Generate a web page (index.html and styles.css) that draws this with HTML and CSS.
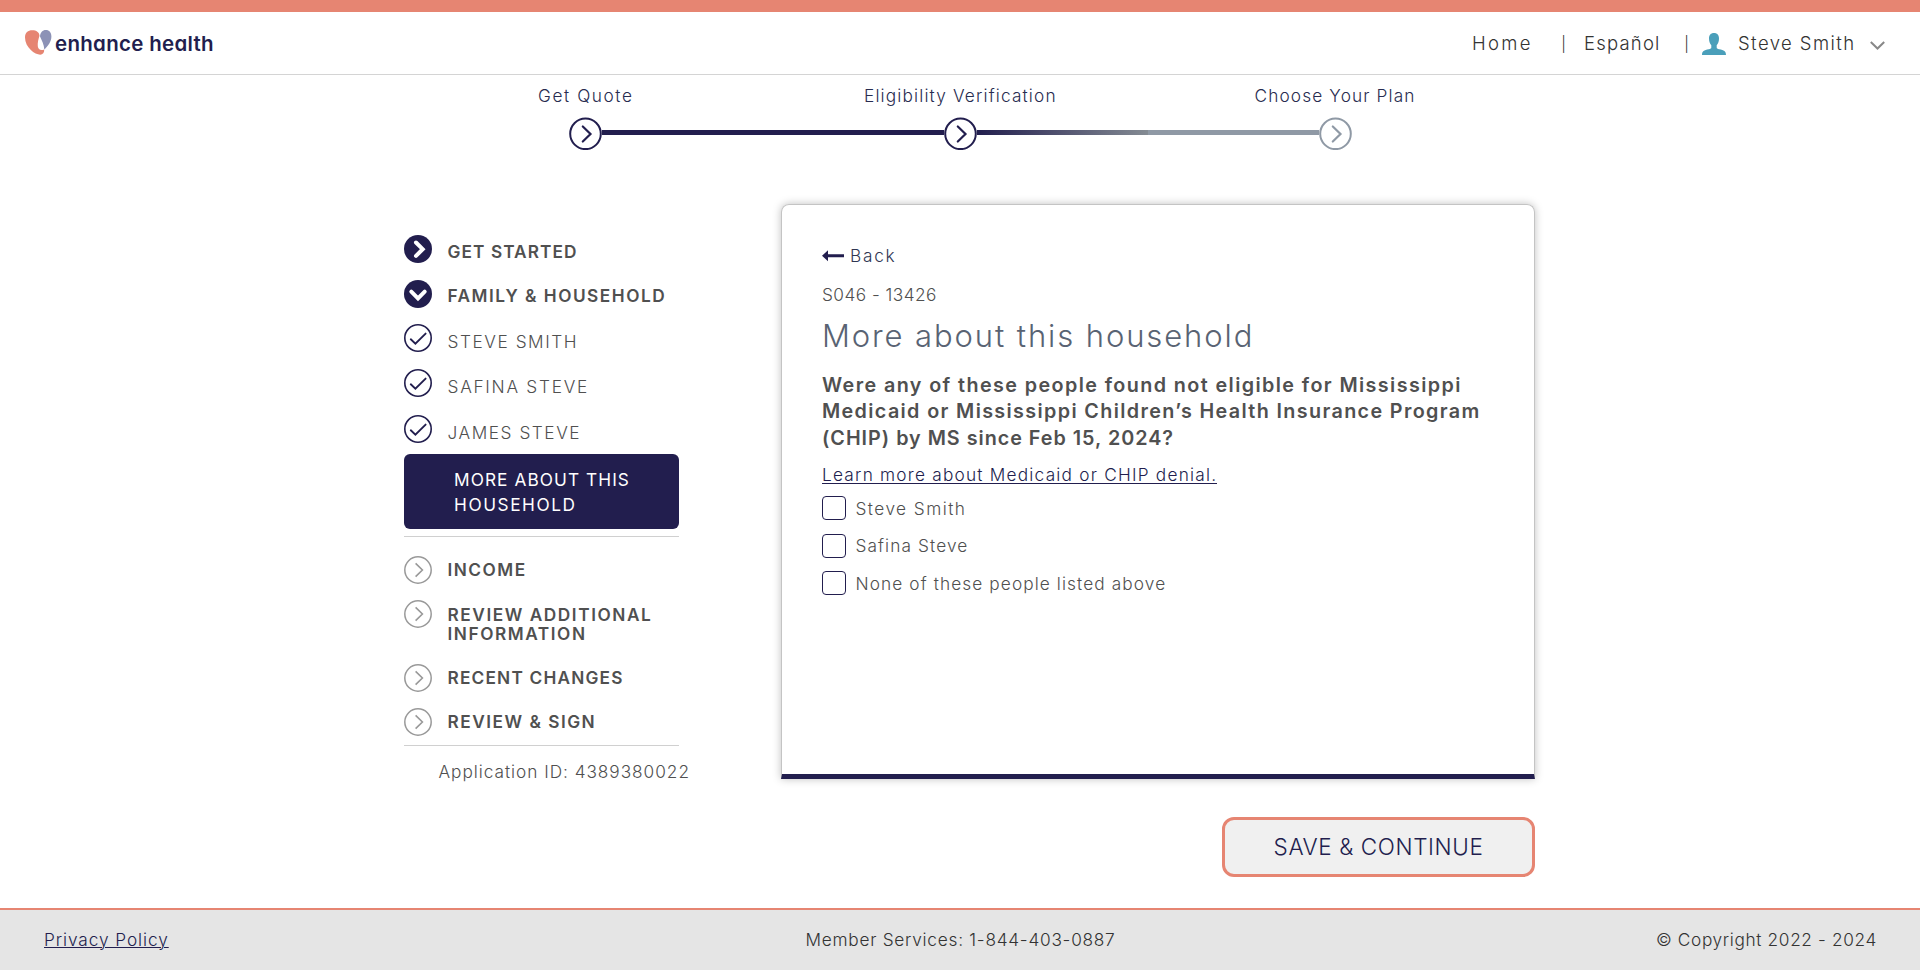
FILE: index.html
```html
<!DOCTYPE html>
<html lang="en">
<head>
<meta charset="utf-8">
<title>Enhance Health</title>
<link rel="stylesheet" href="styles.css">
</head>
<body>
<svg class="defs" aria-hidden="true">
  <symbol id="step" viewBox="0 0 33 33"><circle cx="16.5" cy="16.8" r="15.3" fill="#fff" stroke="currentColor" stroke-width="2"/><path d="M13.8 9.500l7.700 7.500-7.700 7.500" fill="none" stroke="currentColor" stroke-width="2.200" stroke-linecap="round"/></symbol>
  <symbol id="todo" viewBox="0 0 28 28"><circle cx="14" cy="14" r="13.2" fill="none" stroke="currentColor" stroke-width="1.5"/><path d="M11.6 7.4l6.8 6.6-6.8 6.6" fill="none" stroke="currentColor" stroke-width="1.6"/></symbol>
  <symbol id="solid" viewBox="0 0 28 28"><circle cx="14" cy="14" r="14" fill="currentColor"/><path d="M12 7.500l6.700 6.700-6.700 6.700" fill="none" stroke="#fff" stroke-width="4" stroke-linecap="round"/></symbol>
  <symbol id="solid-down" viewBox="0 0 28 28"><circle cx="14" cy="14" r="14" fill="currentColor"/><path d="M7.300 11.600l6.700 6.700 6.700-6.700" fill="none" stroke="#fff" stroke-width="4" stroke-linecap="round"/></symbol>
  <symbol id="check" viewBox="0 0 28 28"><circle cx="14" cy="14" r="13.2" fill="none" stroke="currentColor" stroke-width="1.6"/><path d="M6.8 15.3l4.6 4.3L21.6 9.6" fill="none" stroke="currentColor" stroke-width="1.9" stroke-linecap="round"/></symbol>
</svg>
<header class="header">
  <div class="logo">
    <svg width="27" height="26" viewBox="0 0 27 26"><path d="M0 7.500C0 2.500 3 .3 7.200.3c4.300 0 7 2 7.300 5.400-1.200 3.500-2 7-1.700 10.600.3 3.200 3 4.700 6.400 3.200.2 3.200-1.400 5.200-4 5.200C10 24.700 0 17.500 0 7.500z" fill="#e68572"/><path d="M15 6.500C15.300 2.600 17.500 0 20.800 0c3.500 0 5.600 2.500 5.600 6.500 0 5.500-3.500 9.500-7.100 13C19 14.500 17 11 15 6.500z" fill="#8c92b6"/></svg>
    <span class="brand">enhance health</span>
  </div>
  <nav class="nav">
    <a class="home">Home</a><span class="sep">|</span><a class="lang">Español</a><span class="sep sep2">|</span>
    <svg class="person" width="24" height="23" viewBox="0 0 24 23"><path d="M12 0c3.300 0 5 2.200 5 5.500 0 3-1 5.500-2.300 6.700v2.300c0 1 .8 1.300 2.500 1.700C22 17.200 24 18 24 22H0c0-4 2-4.800 6.800-5.800 1.700-.4 2.500-.7 2.500-1.700v-2.300C8 11 7 8.500 7 5.500 7 2.200 8.700 0 12 0z" fill="#4a9fba"/></svg>
    <a class="user">Steve Smith</a>
    <svg class="caret" width="15" height="9" viewBox="0 0 15 9"><path d="M.8 1l6.700 6.500L14.200 1" fill="none" stroke="#888" stroke-width="2"/></svg>
  </nav>
</header>
<section class="progress">
  <div class="labels"><span class="l1">Get Quote</span><span class="l2">Eligibility Verification</span><span class="l3">Choose Your Plan</span></div>
  <div class="track"><svg class="node"><use href="#step"/></svg><b class="bar"></b><svg class="node"><use href="#step"/></svg><b class="bar fade"></b><b class="bar grey"></b><svg class="node off"><use href="#step"/></svg></div>
</section>
<main class="main">
  <aside class="side">
    <div class="row r1"><svg class="ic"><use href="#solid"/></svg><strong>GET STARTED</strong></div>
    <div class="row r2"><svg class="ic"><use href="#solid-down"/></svg><strong>FAMILY &amp; HOUSEHOLD</strong></div>
    <div class="row r3"><svg class="ic"><use href="#check"/></svg><span>STEVE SMITH</span></div>
    <div class="row r4"><svg class="ic"><use href="#check"/></svg><span>SAFINA STEVE</span></div>
    <div class="row r5"><svg class="ic"><use href="#check"/></svg><span>JAMES STEVE</span></div>
    <div class="active"><span class="a1">MORE ABOUT THIS</span><br><span class="a2">HOUSEHOLD</span></div>
    <hr class="rule">
    <div class="row r6 off"><svg class="ic"><use href="#todo"/></svg><strong>INCOME</strong></div>
    <div class="row r7 off"><svg class="ic"><use href="#todo"/></svg><strong>REVIEW ADDITIONAL<br>INFORMATION</strong></div>
    <div class="row r8 off"><svg class="ic"><use href="#todo"/></svg><strong>RECENT CHANGES</strong></div>
    <div class="row r9 off"><svg class="ic"><use href="#todo"/></svg><strong>REVIEW &amp; SIGN</strong></div>
    <hr class="rule2">
    <p class="appid">Application ID: 4389380022</p>
  </aside>
  <div class="content">
    <section class="card">
      <a class="back"><svg width="22" height="12" viewBox="0 0 22 12"><path d="M0 5.800L6 .3v4h16v3H6v4z" fill="#221e4e"/></svg><span>Back</span></a>
      <p class="code">S046 - 13426</p>
      <h1>More about this household</h1>
      <h2><span class="q1">Were any of these people found not eligible for Mississippi</span><br><span class="q2">Medicaid or Mississippi Children’s Health Insurance Program</span><br><span class="q3">(CHIP) by MS since Feb 15, 2024?</span></h2>
      <a class="learn">Learn more about Medicaid or CHIP denial.</a>
      <label class="opt o1"><i class="box"></i><span>Steve Smith</span></label>
      <label class="opt"><i class="box"></i><span>Safina Steve</span></label>
      <label class="opt"><i class="box"></i><span>None of these people listed above</span></label>
    </section>
    <button class="save">SAVE &amp; CONTINUE</button>
  </div>
</main>
<footer class="footer"><a class="privacy">Privacy Policy</a><span class="member">Member Services: 1-844-403-0887</span><span class="copy">© Copyright 2022 - 2024</span></footer>
</body>
</html>
```
FILE: styles.css
```css
* { box-sizing: border-box; }
body { margin: 0; height: 970px; overflow: hidden; display: flex; flex-direction: column; background: #fff; color: #505050; font: 300 17.25px/19px Inter, "Open Sans", sans-serif; }
p, h1, h2 { margin: 0; }
.defs { position: absolute; width: 0; height: 0; }

/* Header */
.header { height: 75px; flex: none; border-top: 12px solid #e68572; border-bottom: 1px solid #d4d4d4; display: flex; justify-content: space-between; padding: 0 35px 0 25px; }
.logo { display: flex; padding-top: 18px; }
.brand { font-size: 20.5px; font-weight: 600; line-height: 28px; color: #221e4e; margin-left: 3px; letter-spacing: .3px; font-feature-settings: "cv11"; }
.nav { display: flex; font-size: 18.5px; line-height: 24px; color: #333; padding-top: 19px; white-space: nowrap; }
.sep { width: 7px; margin: 0 -3px; font-size: 15px; line-height: 26px; text-align: center; }
.home { width: 91px; letter-spacing: 2.3px; }
.lang { margin-left: 20px; width: 80px; letter-spacing: 1.2px; }
.sep2 { margin-left: 19px; }
.person { margin: 2px 12px 0 15px; }
.user { width: 132px; letter-spacing: 1.42px; }
.caret { margin-top: 10px; }

/* Progress tracker */
.progress { height: 129px; flex: none; width: 960px; margin-left: 480px; color: #221e4e; }
.labels { display: flex; padding-top: 11px; height: 42px; color: #282c50; white-space: nowrap; }
.l1 { margin-left: 58px; width: 326px; letter-spacing: 1.58px; }
.l2 { width: 390px; letter-spacing: 1.15px; }
.l3 { margin-left: .5px; letter-spacing: 1.13px; }
.track { display: flex; padding-left: 89px; align-items: flex-start; }
.node { width: 33px; height: 33px; flex: none; }
.bar { height: 5px; width: 342px; background: #221e4e; margin-top: 13px; }
.fade { width: 171px; background: linear-gradient(90deg, #221e4e, #848b93); }
.grey { width: 171px; background: #8f99a5; }
.node.off { color: #8f99a5; }

/* Sidebar */
.main { display: flex; flex: none; height: 704px; padding-left: 404px; }
.side { width: 377px; padding-top: 31px; }
.row { display: grid; grid-template-columns: 28px auto; column-gap: 15.5px; align-items: start; justify-content: start; white-space: nowrap; }
.row strong { font-weight: 600; padding-top: 4px; letter-spacing: 1.5px; }
.row span { padding-top: 7.5px; letter-spacing: 1.55px; }
.ic { width: 28px; height: 28px; color: #221e4e; }
.off .ic { color: #999; }
.r1 { height: 45px; }
.r1 strong { padding-top: 7px; letter-spacing: 1.07px; }
.r2 { height: 44px; }
.r2 strong { padding-top: 5.5px; }
.r3 { height: 45px; }
.r4 { height: 46px; }
.r4 span { letter-spacing: 1.73px; }
.r5 { height: 39px; }
.active { width: 275px; height: 75px; border-radius: 6px; background: #221e4e; color: #fff; line-height: 25px; padding: 12.5px 0 0 50px; font-weight: 400; white-space: nowrap; }
.a1 { letter-spacing: 1.07px; }
.a2 { letter-spacing: 1.56px; }
.rule, .rule2 { width: 275px; border: 0; height: 1px; background: #d0d0d0; margin: 7px 0 18.5px; }
.r6 { height: 44.5px; }
.r7 { height: 63.5px; }
.r7 strong { padding-top: 4.5px; letter-spacing: 1.55px; }
.r8 { height: 44px; }
.r8 strong { letter-spacing: 1.19px; }
.r9 { height: 37.5px; }
.rule2 { margin: 0; }
.appid { padding: 16px 0 0 34.5px; letter-spacing: .96px; white-space: nowrap; }

/* Question card */
.content { width: 754px; }
.card { height: 575px; border: 1px solid #c4c4c4; border-bottom: 5px solid #221e4e; border-radius: 8px 8px 0 0; box-shadow: 0 0 8px rgba(0, 0, 0, .25); padding: 41px 40px 0; display: flex; flex-direction: column; align-items: flex-start; white-space: nowrap; }
.back { display: flex; color: #2f3652; gap: 6px; letter-spacing: 1.75px; }
.back svg { margin-top: 4px; }
.code { margin-top: 20px; letter-spacing: .46px; }
h1 { font-size: 31px; line-height: 40px; font-weight: 300; color: #596373; margin-top: 12px; letter-spacing: 1.9px; }
h2 { font-size: 19.75px; line-height: 26.5px; font-weight: 600; margin: 15.5px 0 14.5px; }
.q1 { letter-spacing: 1.4px; }
.q2 { letter-spacing: 1.36px; }
.q3 { letter-spacing: .99px; }
.learn { color: #221e4e; border-bottom: 1px solid #221e4e; line-height: 17px; height: 18px; letter-spacing: 1.22px; }
.opt { display: flex; gap: 9.5px; height: 37.5px; align-items: flex-start; letter-spacing: 1.1px; }
.opt span { margin-top: 2.5px; }
.o1 { margin-top: 12.5px; letter-spacing: 1.45px; }
.box { width: 24px; height: 24px; border: 1px solid #221e4e; border-radius: 4px; }
.save { display: block; margin: 38px 0 0 auto; width: 313px; height: 60px; border: 3px solid #e68572; border-radius: 12px; background: #f0f0f0; color: #221e4e; font: 300 22.5px/26px Inter, sans-serif; letter-spacing: .6px; }

/* Footer */
.footer { height: 62px; flex: none; border-top: 2px solid #e68572; background: #e5e5e5; color: #333; display: grid; grid-template-columns: 1fr auto 1fr; padding: 20px 43px 0 44px; }
.privacy { justify-self: start; color: #221e4e; text-decoration: underline; text-decoration-thickness: 1px; letter-spacing: .92px; }
.member { letter-spacing: .74px; }
.copy { letter-spacing: .64px; text-align: right; }
```
